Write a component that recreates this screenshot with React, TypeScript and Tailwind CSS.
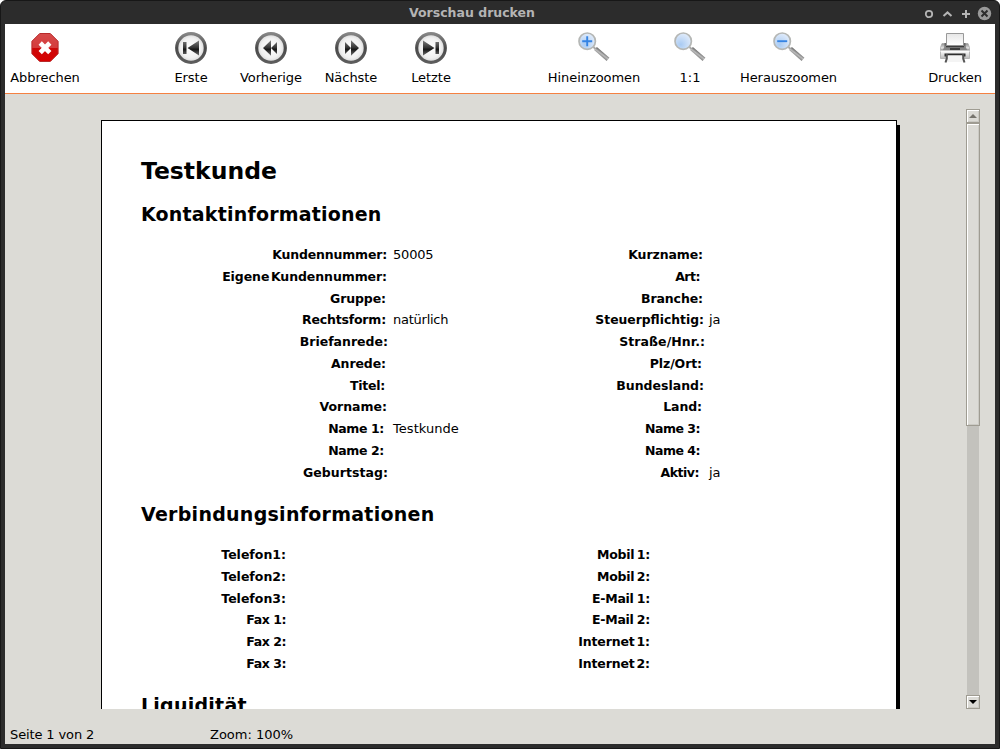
import type { ReactNode } from 'react';

type Entry = { label: string; cls?: string; value?: string; vcls?: string };

const contactLeft: Entry[] = [
  { label: 'Kundennummer:', cls: 'mr-px tracking-[-0.18px]', value: '50005', vcls: 'tracking-[-0.2px]' },
  { label: 'Eigene Kundennummer:', cls: 'mr-px tracking-[-0.08px] [word-spacing:-2.6px]' },
  { label: 'Gruppe:', cls: 'mr-0.5 tracking-[-0.1px]' },
  { label: 'Rechtsform:', cls: 'mr-0.5 tracking-[-0.18px]', value: 'natürlich', vcls: 'tracking-[-0.25px]' },
  { label: 'Briefanrede:' },
  { label: 'Anrede:', cls: 'mr-0.5 tracking-[-0.1px]' },
  { label: 'Titel:', cls: 'mr-[3px] tracking-[-0.25px]' },
  { label: 'Vorname:', cls: 'mr-px' },
  { label: 'Name 1:', cls: 'mr-1 tracking-[-0.38px]', value: 'Testkunde', vcls: 'tracking-[0.05px]' },
  { label: 'Name 2:', cls: 'mr-1 tracking-[-0.38px]' },
  { label: 'Geburtstag:', cls: 'tracking-[0.05px]' },
];

const contactRight: Entry[] = [
  { label: 'Kurzname:', cls: 'mr-px tracking-[-0.1px]' },
  { label: 'Art:', cls: 'mr-1 tracking-[-0.5px]' },
  { label: 'Branche:', cls: 'mr-px tracking-[-0.1px]' },
  { label: 'Steuerpflichtig:', cls: 'text-[12.35px]', value: 'ja' },
  { label: 'Straße/Hnr.:', cls: '-mr-px tracking-[0.05px]' },
  { label: 'Plz/Ort:', cls: 'mr-0.5 tracking-[-0.1px]' },
  { label: 'Bundesland:' },
  { label: 'Land:', cls: 'mr-0.5 tracking-[-0.1px]' },
  { label: 'Name 3:', cls: 'mr-1 tracking-[-0.5px]' },
  { label: 'Name 4:', cls: 'mr-1 tracking-[-0.5px]' },
  { label: 'Aktiv:', cls: 'mr-[5px] tracking-[-0.5px]', value: 'ja' },
];

const connectionLeft: Entry[] = [
  { label: 'Telefon1:' },
  { label: 'Telefon2:' },
  { label: 'Telefon3:' },
  { label: 'Fax 1:', cls: 'tracking-[-0.45px]' },
  { label: 'Fax 2:', cls: 'tracking-[-0.45px]' },
  { label: 'Fax 3:', cls: 'tracking-[-0.45px]' },
];

const connectionRight: Entry[] = [
  { label: 'Mobil 1:', cls: 'tracking-[-0.25px] [word-spacing:-1.6px]' },
  { label: 'Mobil 2:', cls: 'tracking-[-0.25px] [word-spacing:-1.6px]' },
  { label: 'E-Mail 1:', cls: 'tracking-[-0.28px] [word-spacing:-0.8px]' },
  { label: 'E-Mail 2:', cls: 'tracking-[-0.28px] [word-spacing:-0.8px]' },
  { label: 'Internet 1:', cls: 'tracking-[-0.12px] [word-spacing:-2.4px]' },
  { label: 'Internet 2:', cls: 'tracking-[-0.12px] [word-spacing:-2.4px]' },
];

function Column({ entries, width }: { entries: Entry[]; width: string }) {
  return (
    <div className="flex flex-col">
      {entries.map((e) => (
        <div key={e.label} className="flex h-[21.77px] items-baseline gap-[5px] whitespace-pre leading-[22px]">
          <div className={`flex shrink-0 justify-end text-[12.5px] font-bold ${width}`}>
            <span className={e.cls ?? ''}>{e.label}</span>
          </div>
          <span className={e.vcls ?? ''}>{e.value}</span>
        </div>
      ))}
    </div>
  );
}

function ToolButton({ label, width, children }: { label: string; width: string; children: ReactNode }) {
  return (
    <button className={`flex h-full shrink-0 flex-col items-center pt-2 ${width}`}>
      {children}
      <span className="mt-1.5 whitespace-nowrap leading-4 tracking-[-0.05px]">{label}</span>
    </button>
  );
}

function CancelIcon() {
  return (
    <svg width="32" height="32" viewBox="0 0 32 32">
      <defs>
        <linearGradient id="red" x1="0" y1="0" x2="0" y2="1">
          <stop offset="0" stopColor="#d64a4a" />
          <stop offset=".5" stopColor="#d43c3c" />
          <stop offset=".52" stopColor="#cc0808" />
          <stop offset="1" stopColor="#d80000" />
        </linearGradient>
      </defs>
      <path d="M10.700 1.500h10.600l7.800 7.800v12.400l-7.800 7.800H10.700l-7.800-7.800V9.300z" fill="url(#red)" stroke="#b82a2a" />
      <path d="M11.200 11l9.600 9.600M20.800 11l-9.600 9.600" stroke="#fff" strokeWidth="4.600" />
    </svg>
  );
}

function MediaIcon({ kind }: { kind: 'first' | 'prev' | 'next' | 'last' }) {
  return (
    <svg width="32" height="32" viewBox="0 0 32 32">
      <defs>
        <linearGradient id="ring" x1="0" y1="0" x2="0" y2="1">
          <stop offset="0" stopColor="#858585" />
          <stop offset=".5" stopColor="#4a4a4a" />
          <stop offset="1" stopColor="#5c5c5c" />
        </linearGradient>
        <radialGradient id="disc">
          <stop offset="0" stopColor="#fff" />
          <stop offset=".7" stopColor="#f0f0f0" />
          <stop offset="1" stopColor="#d4d4d4" />
        </radialGradient>
        <linearGradient id="glyph" gradientUnits="userSpaceOnUse" x1="0" y1="9" x2="0" y2="24">
          <stop offset="0" stopColor="#777" />
          <stop offset=".45" stopColor="#333" />
          <stop offset=".55" stopColor="#151515" />
          <stop offset="1" stopColor="#777" />
        </linearGradient>
      </defs>
      <circle cx="16" cy="16" r="14.300" fill="url(#disc)" stroke="url(#ring)" strokeWidth="3.200" />
      {kind === 'first' && <path d="M8 10h3.500v12H8zM24 8.500v15L12.500 16z" fill="url(#glyph)" />}
      {kind === 'prev' && <path d="M16 8.300v15.400L8 16zM22 10v12l-6-6z" fill="url(#glyph)" />}
      {kind === 'next' && <path d="M10 10v12l6-6zM16 8.300v15.400L24 16z" fill="url(#glyph)" />}
      {kind === 'last' && <path d="M8 8.500v15L19.500 16zM20.500 10H24v12h-3.500z" fill="url(#glyph)" />}
    </svg>
  );
}

function ZoomIcon({ kind }: { kind: 'in' | 'normal' | 'out' }) {
  return (
    <svg width="32" height="32" viewBox="0 0 32 32">
      <defs>
        <radialGradient id="lens" cx=".35" cy=".7" r=".8">
          <stop offset="0" stopColor="#a9cbf3" />
          <stop offset=".6" stopColor="#cfe1f8" />
          <stop offset="1" stopColor="#e6effb" />
        </radialGradient>
        <linearGradient id="handle" gradientUnits="userSpaceOnUse" x1="25" y1="20" x2="22" y2="24">
          <stop offset="0" stopColor="#6c6c6c" />
          <stop offset=".5" stopColor="#bcbcbc" />
          <stop offset="1" stopColor="#808080" />
        </linearGradient>
      </defs>
      <path d="M15 14.500l3 3" stroke="#aaa" strokeWidth="2" />
      <path d="M17.500 16.500L30 27.300" stroke="url(#handle)" strokeWidth="4.200" />
      <circle cx="9.200" cy="9.200" r="8.200" fill="url(#lens)" stroke="#b5b7b5" strokeWidth="1.700" />
      {kind === 'in' && <path d="M9.200 4.200v10M4.200 9.200h10" stroke="#3584e4" strokeWidth="1.900" />}
      {kind === 'out' && <path d="M4.200 9.200h10" stroke="#3584e4" strokeWidth="1.900" />}
    </svg>
  );
}

function PrinterIcon() {
  return (
    <svg width="32" height="32" viewBox="0 0 32 32">
      <defs>
        <linearGradient id="body" x1="0" y1="0" x2="0" y2="1">
          <stop offset="0" stopColor="#8c8c8c" />
          <stop offset=".3" stopColor="#e4e4e4" />
          <stop offset=".45" stopColor="#8a8a8a" />
          <stop offset=".55" stopColor="#f8f8f8" />
          <stop offset="1" stopColor="#b8b8b8" />
        </linearGradient>
        <linearGradient id="sheet" x1="0" y1="0" x2="0" y2="1">
          <stop offset="0" stopColor="#e6e6e6" />
          <stop offset="1" stopColor="#fff" />
        </linearGradient>
      </defs>
      <path d="M3 11.500h26l1.500 4v11h-29v-11z" fill="url(#body)" stroke="#aaa" strokeWidth=".8" />
      <path d="M5.500 11h21v4h-21z" fill="#666" />
      <path d="M7.500 1.500h17v12h-17z" fill="url(#sheet)" stroke="#999" />
      <path d="M6 13.700h20l2.500 4.800h-25z" fill="#858585" />
      <path d="M7 14h18v1.200H7zM11 16h10v2H11z" fill="#3c3c3c" />
      <path d="M1.500 18.500h29V20h-29z" fill="#fafafa" />
      <path d="M5.500 21.500h21v3h-21z" fill="#2d2d2d" />
      <path d="M8.500 23.300h15l2 6.700h-19z" fill="#f4f4f4" />
      <path d="M7.800 22v4.500L6.500 30.500M24.200 22v4.500l1.300 4" fill="none" stroke="#555" strokeWidth="2" />
    </svg>
  );
}

function ScrollBox({ className, children }: { className: string; children?: ReactNode }) {
  return (
    <div
      className={`flex w-[14px] shrink-0 items-center justify-center border border-[#9f9c92] bg-[#dcdbd6] shadow-[inset_1px_1px_0_#fff,inset_-1px_-1px_0_#cbcac4] ${className}`}
    >
      {children}
    </div>
  );
}

export default function App() {
  return (
    <div className="h-[749px] w-[1000px] overflow-hidden bg-white font-['DejaVu_Sans',sans-serif] text-[13px] text-black">
      <div className="flex h-full flex-col rounded-t-[6px] border border-[#171717] bg-[#2c2c2c] px-1 pb-1">
        <header className="grid h-[23px] shrink-0 grid-cols-[1fr_auto_1fr] items-center">
          <div />
          <h1 className="pr-[56px] text-[12.5px] leading-5 font-bold text-[#b4b4b4]">Vorschau drucken</h1>
          <svg className="justify-self-end" width="71" height="22" viewBox="0 0 71 22">
            <circle cx="5" cy="12" r="3.200" fill="none" stroke="#b4b4b4" strokeWidth="1.800" />
            <path d="M19.500 14l4-3.600 4 3.600M38 12h8M42 8v8" fill="none" stroke="#b4b4b4" strokeWidth="2" />
            <circle cx="60.500" cy="11.500" r="6.700" fill="#999" />
            <path d="M57.500 8.500l6 6M63.500 8.500l-6 6" stroke="#2c2c2c" strokeWidth="2" />
          </svg>
        </header>

        <nav className="flex h-[70px] shrink-0 border-b border-[#f58142] bg-white">
          <ToolButton label="Abbrechen" width="w-20"><CancelIcon /></ToolButton>
          <div className="ml-[66px] flex">
            <ToolButton label="Erste" width="w-20"><MediaIcon kind="first" /></ToolButton>
            <ToolButton label="Vorherige" width="w-20"><MediaIcon kind="prev" /></ToolButton>
            <ToolButton label="Nächste" width="w-20"><MediaIcon kind="next" /></ToolButton>
            <ToolButton label="Letzte" width="w-20"><MediaIcon kind="last" /></ToolButton>
          </div>
          <div className="ml-[73px] flex">
            <ToolButton label="Hineinzoomen" width="w-[100px]"><ZoomIcon kind="in" /></ToolButton>
            <ToolButton label="1:1" width="w-[92px]"><ZoomIcon kind="normal" /></ToolButton>
            <ToolButton label="Herauszoomen" width="w-[105px]"><ZoomIcon kind="out" /></ToolButton>
          </div>
          <div className="ml-auto flex">
            <ToolButton label="Drucken" width="w-20"><PrinterIcon /></ToolButton>
          </div>
        </nav>

        <div className="flex min-h-0 grow flex-col bg-[#dcdbd6]">
          <main className="flex h-[615px] shrink-0 overflow-hidden">
            <div className="ml-24 flex h-[615px] w-[799px] items-start overflow-hidden pt-[26px]">
              <article className="h-[1100px] w-[796px] shrink-0 border border-black bg-white pl-[39px]">
                <h2 className="mt-[33px] text-[23.5px] leading-[34px] font-bold">Testkunde</h2>
                <h3 className="mt-[13px] text-[19px] leading-[26px] font-bold tracking-[0.2px]">Kontaktinformationen</h3>
                <div className="mt-[17px] grid grid-cols-[317px_1fr]">
                  <Column entries={contactLeft} width="w-[247px]" />
                  <Column entries={contactRight} width="w-[246px]" />
                </div>
                <h3 className="mt-[17.53px] text-[19px] leading-[26px] font-bold tracking-[0.27px]">Verbindungsinformationen</h3>
                <div className="mt-[17.06px] grid grid-cols-[364px_1fr]">
                  <Column entries={connectionLeft} width="w-[145px]" />
                  <Column entries={connectionRight} width="w-[145px]" />
                </div>
                <h3 className="mt-[17.340px] text-[19px] leading-[26px] font-bold tracking-[0.25px]">Liquidität</h3>
              </article>
              <div className="mt-[5px] h-[1100px] w-[3px] shrink-0 bg-black" />
            </div>
            <div className="mt-[15px] ml-[66px] flex w-[14px] flex-col bg-[linear-gradient(90deg,transparent_1px,#c3c2bd_1px,#c3c2bd_13px,transparent_13px)]">
              <ScrollBox className="h-[14px]">
                <svg width="8" height="4" viewBox="0 0 8 4"><path d="M4 0l4 4H0z" fill="#77756e" /></svg>
              </ScrollBox>
              <ScrollBox className="h-[303px]" />
              <ScrollBox className="mt-auto h-[14px]">
                <svg width="8" height="4" viewBox="0 0 8 4"><path d="M0 0h8L4 4z" fill="#000" /></svg>
              </ScrollBox>
            </div>
          </main>
          <footer className="flex h-[35px] shrink-0 items-center pt-[17px] pl-[5px] whitespace-nowrap">
            <span className="w-[200px] tracking-[-0.12px]">Seite 1 von 2</span>
            <span>Zoom: 100%</span>
          </footer>
        </div>
      </div>
    </div>
  );
}
